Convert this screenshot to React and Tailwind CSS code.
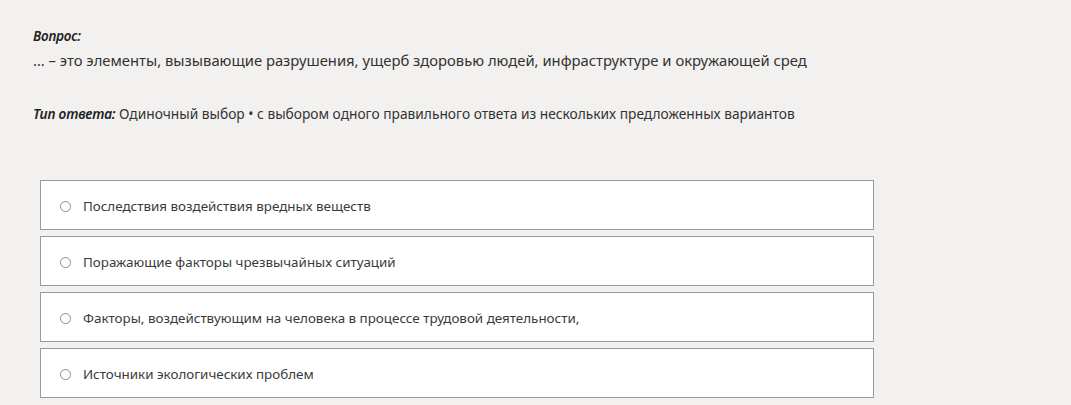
export default function App() {
  const options = [
    "Последствия воздействия вредных веществ",
    "Поражающие факторы чрезвычайных ситуаций",
    "Факторы, воздействующим на человека в процессе трудовой деятельности,",
    "Источники экологических проблем",
  ];
  return (
    <div className="w-[1071px] h-[405px] overflow-hidden bg-[#f2f1ef] text-[#333] font-['Noto_Sans',sans-serif]">
      <div className="pl-[33px] pt-[27px]">
        <div className="text-[13.5px] leading-[19px] italic font-semibold text-[#222] tracking-[-0.2px]">Вопрос:</div>
        <div className="mt-[4px] text-[14.8px] leading-[20px]">
          … – это элементы, вызывающие разрушения, ущерб здоровью людей, инфраструктуре и окружающей сред
        </div>
        <div className="mt-[34px] text-[13.75px] leading-[20px]">
          <span className="italic font-semibold text-[#222] tracking-[-0.2px]">Тип ответа:</span> Одиночный выбор • с выбором одного правильного ответа из нескольких предложенных вариантов
        </div>
      </div>
      <div className="ml-[40px] mt-[56px] w-[834px] flex flex-col gap-[6px]">
        {options.map((o) => (
          <div key={o} className="h-[50px] bg-white border border-[#9a9a9a] flex items-center pl-[19px] gap-[12px] pt-[2px]">
            <span className="w-[11px] h-[11px] rounded-full border border-[#8a8a8a] shrink-0" />
            <span className="text-[13.4px] text-[#3a3a3a]">{o}</span>
          </div>
        ))}
      </div>
    </div>
  );
}
